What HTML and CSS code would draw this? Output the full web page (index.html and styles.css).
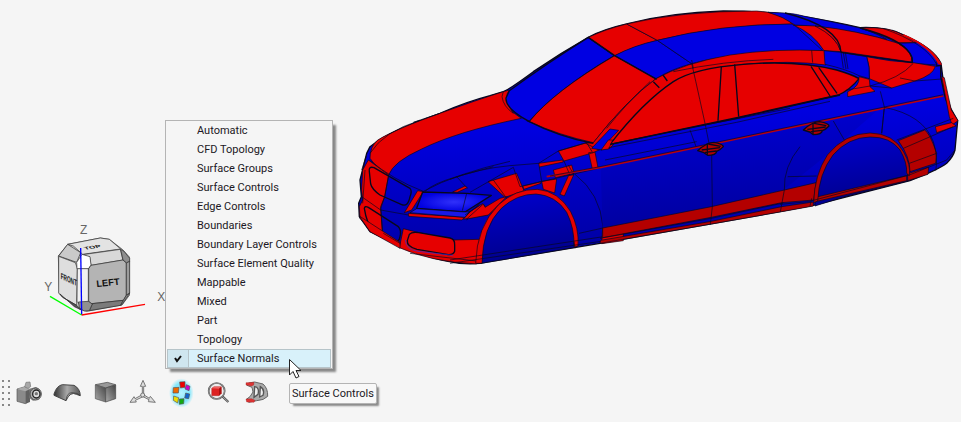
FILE: index.html
```html
<!DOCTYPE html>
<html lang="en">
<head>
<meta charset="utf-8">
<title>Model view</title>
<link rel="stylesheet" href="styles.css">
</head>
<body>
<main class="viewer">
  <div class="scene">
    <svg class="cube" viewBox="30 20 384 290" role="img" aria-label="View cube">
      <g class="edge">
        <path fill="#d2d2d2" d="M113 87L211 68L238 72L278 103L298 125V240L276 269L170 288L150 282L88 235L85 122Z"/>
        <path fill="#e3e3e3" d="M113 87L211 68L238 72L272 101L158 117L130 92Z"/>
        <path fill="#cacaca" d="M113 87L152 112L140 141L86 122Z"/>
        <path fill="#dedede" d="M86 123L136 142L142 159L140 270L98 246L86 233Z"/>
        <path fill="#d8d8d8" d="M158 118L271 102L279 134L183 150L179 126Z"/>
        <path fill="#fff" d="M140 141L156 117L180 124L183 149L175 161H141Z"/>
        <path fill="#f1f1f1" d="M142 160H175V260L150 268L141 258Z"/>
        <path fill="#b4b4b4" d="M176 160L183 150L279 134L289 143V239L280 255L183 265L176 257Z"/>
        <path fill="#8e8e8e" d="M272 102L281 107L299 129V139L289 142L279 134Z"/>
        <path fill="#9c9c9c" d="M289 143L299 138V233L289 239Z"/>
        <path fill="#7b7b7b" d="M187 265L280 255L272 270L178 286Z"/>
        <path fill="#8a8a8a" d="M280 255L289 240L299 234L276 268L272 270Z"/>
        <path fill="#909090" d="M145 260L175 258L187 266L178 286L162 287L148 277Z"/>
        <path fill="#555" d="M98 246L140 270L154 284L133 274L90 236Z"/>
      </g>
      <text class="face" x="200" y="215" font-size="28" transform="rotate(-6 200 215)">LEFT</text>
      <text class="face" font-size="26" transform="matrix(.54 .25 0 1 92 190)">FRONT</text>
      <text class="face" font-size="28" transform="matrix(.85 -.13 .3 .4 166 103)">TOP</text>
      <path class="axis" stroke="#00f" d="M152 98L155 299"/>
      <path class="axis" stroke="#0f0" d="M60 243L155 299"/>
      <path class="axis" stroke="red" d="M155 299L345 267"/>
      <text class="axis-name" x="150" y="56">Z</text>
      <text class="axis-name" x="43" y="227">Y</text>
      <text class="axis-name" x="382" y="257">X</text>
    </svg>
    <svg class="car" viewBox="1050 0 1833 840" role="img" aria-label="Car body coloured by surface normals">
      <defs>
        <linearGradient id="blue" x1="0" y1="0" x2=".15" y2="1"><stop offset="0" stop-color="#0000ef"/><stop offset=".5" stop-color="#0000df"/><stop offset="1" stop-color="#0000a0"/></linearGradient>
        <linearGradient id="door" x1="0" y1="0" x2=".2" y2="1"><stop offset="0" stop-color="#0000da"/><stop offset="1" stop-color="#00009f"/></linearGradient>
        <linearGradient id="wheel" x1="0" y1="0" x2=".2" y2="1"><stop offset="0" stop-color="#0000d2"/><stop offset="1" stop-color="#00008c"/></linearGradient>
        <radialGradient id="lamp"><stop offset="0" stop-color="#3030fa"/><stop offset="1" stop-color="#0000e0"/></radialGradient>
      </defs>
      <path class="line body" d="M1125 429Q1165 396 1320 340Q1400 305 1470 287L1510 275Q1525 270 1600 215Q1680 160 1765 112Q1810 88 1880 72Q2010 38 2170 33Q2290 33 2400 48Q2500 65 2580 83Q2660 79 2720 110Q2800 145 2823 190L2832 260L2852 325L2873 362L2865 450Q2860 470 2840 490Q2815 510 2730 542L2440 616L2340 635L1800 730L1440 790Q1390 795 1340 783Q1260 770 1110 695L1078 650L1076 610L1084 590L1080 540L1100 460L1110 440Z"/>

      <!-- hood and front fascia -->
      <g class="line" transform="translate(1050 240)">
        <path class="red" d="M60 235Q60 200 82 181Q130 150 270 100Q380 60 460 35Q464 85 514 115Q320 155 215 207Q130 245 116 285Q80 265 60 235Z"/>
        <path d="M60 220Q100 155 210 121Q150 140 270 100M58 240Q130 300 220 334M220 334Q320 280 480 244M225 334Q250 310 320 290L430 260"/>
        <path class="red" d="M55 240L116 285L104 350L92 385L98 470L60 448L30 415L28 380L38 360L35 330L38 270Z"/>
        <path class="wide" d="M58 275Q55 258 72 263L180 325Q187 333 180 350Q174 382 155 374L90 345Q66 328 62 312ZM43 385Q44 377 55 382L145 440Q155 450 150 470Q148 488 130 481L68 449Q50 430 43 385Z"/>
        <path d="M116 285L104 350L92 380L98 460M35 350L92 390L175 405M35 270L48 230M45 270L38 370"/>
        <path class="red" d="M203 332L220 335L185 390L163 398Z"/>
        <path class="red" d="M148 503L160 446L195 455L310 480L388 478L380 552Q240 545 148 503Z"/>
        <path class="red" d="M28 408L150 487V505L60 455Z"/>
        <path class="wide red" d="M178 463Q185 455 206 458L300 474Q315 477 314 495V514Q310 525 295 524L201 508Q170 500 172 482Z"/>
        <path stroke="#3030e0" d="M166 480Q167 508 204 514L310 526"/>
        <path class="red" d="M175 400L345 412L335 420L176 409Z"/>
        <path class="wide" fill="url(#lamp)" d="M218 336L350 340L424 346L345 396L200 385Z"/>
        <path fill="#1818e8" d="M200 386L345 396L360 395L345 412L180 398Z"/>
        <path class="red" d="M340 418L360 395L398 371L410 385L435 388L415 404Z"/>
        <path d="M350 340L337 392M320 290L352 325M350 420L405 375M345 405L388 376"/>
        <path class="red" d="M308 336L345 318L352 323L322 337Z"/>
        <path d="M180 520L380 543L480 530M100 460L150 490M390 370L350 405"/>
      </g>

      <!-- front fender and wheel -->
      <g class="line" transform="translate(1350 360)">
        <path fill="url(#wheel)" d="M92 430Q90 330 145 265Q190 218 258 215Q330 220 362 285Q380 330 376 382Z"/>
        <path class="red" d="M114 185L200 160L222 212L165 232Z"/>
        <path class="red" d="M50 297L100 252L105 262L150 235L170 230L115 285Z"/>
        <path class="red" d="M325 93L410 68L430 98L342 123ZM266 130L338 120L340 126L268 141ZM310 150L365 135L372 160L316 173ZM416 98L435 96L444 143L427 147ZM275 184L320 177L314 219L280 208ZM356 166L371 165L343 228L330 223ZM218 198L272 185L273 190L222 208Z"/>
        <path class="red" d="M77 430Q80 320 145 255Q195 207 262 208Q325 213 362 275Q388 325 384 378L372 382Q374 325 350 277Q317 226 258 222Q200 222 154 265Q98 320 96 430Z"/>
        <path d="M0 178Q90 145 180 137L266 130L325 93L410 68M60 217L190 142L210 200L445 145L510 130M268 141L275 184M130 180L170 235M342 123L360 166M355 135L372 165M375 163Q450 220 459 320V370M387 340L459 324M0 420L460 350M0 430L460 363M375 385L372 365"/>
        <path class="red" d="M458 324L520 315V362L455 371ZM410 68L430 65L452 88L428 98Z"/>
      </g>

      <!-- windshield, roof front and side glass -->
      <g class="line" transform="translate(1470 0)">
        <path class="red" d="M40 275L58 270Q42 290 58 320L70 340Q40 320 36 290Z"/>
        <path class="wide blue" d="M58 272Q170 190 295 112L374 167Q200 270 118 365Q45 325 48 294Z"/>
        <path class="red" d="M118 365Q190 275 374 167L498 236Q410 300 310 428Q205 405 118 365Z"/>
        <path class="red" d="M295 112Q345 88 410 72L502 121Q430 140 374 167Z"/>
        <path class="blue" d="M374 167Q430 137 502 121L605 191Q545 207 498 236Z"/>
        <path class="red" d="M410 72Q570 33 800 33L880 42L910 72Q690 75 502 121Z"/>
        <path class="blue" d="M502 121Q690 72 910 72L998 152Q750 150 605 191Z"/>
        <path class="red" d="M498 236Q580 190 720 165Q850 145 1005 152L1008 195Q900 180 760 193Q620 205 550 255Q470 310 360 445L325 449L287 430L310 428Q410 300 498 236Z"/>
        <path class="wide red" d="M360 433Q460 305 550 245Q610 205 760 193Q920 180 1040 210Q1090 225 1107 236Q1080 270 1045 285L740 353Z"/>
        <path class="heavy" d="M694 200L684 362M734 193L746 350M963 199L1020 288M986 202L1041 280"/>
        <path d="M605 191Q610 210 645 370L660 445M605 180L610 205M550 215Q700 183 850 178M965 151L968 188M480 245Q405 315 350 385"/>
        <path class="heavy" d="M295 112L374 167L500 238M519 225L532 243M490 245L508 263"/>
        <path class="blue" d="M305 445L360 387L386 391L360 418Q345 440 335 450Z"/>
        <path class="red" d="M333 450L355 420L368 420L356 447Z"/>
        <path d="M356 443L740 367L1020 304M345 480L620 425M600 390L620 445M640 376L900 325"/>
        <path class="heavy" d="M360 433L740 355L1050 285M110 361Q210 412 310 430"/>
      </g>

      <!-- rear deck -->
      <g class="line" transform="translate(2100 0)">
        <path class="red" d="M205 37L255 44L320 75H280Q260 50 205 37ZM280 75H345Q410 110 423 155L372 152Q340 100 280 75Z"/>
        <path class="blue" d="M205 37Q280 38 310 48Q410 68 480 84Q530 100 560 118Q450 90 345 78L285 75Q250 50 205 37Z"/>
        <path class="red" d="M345 78Q470 90 595 130Q642 160 634 186L423 155Q410 110 345 78Z"/>
        <path class="red" d="M480 84Q570 78 610 105L652 128H590Q550 105 480 84Z"/>
        <path class="blue" d="M595 130L652 128Q720 165 710 195L638 190Q640 155 595 130Z"/>
        <path class="red" d="M500 170Q570 185 640 188L706 199Q700 225 645 243L575 264L508 236Q510 200 500 170Z"/>
        <path class="blue" d="M372 152L423 157L500 170Q510 200 508 236L477 227Q440 208 375 193Z"/>
        <path class="red" d="M477 230L508 238L510 260L525 274L443 290V275Q480 260 477 230Z"/>
        <path class="heavy" d="M255 39Q420 80 423 157M480 84Q600 115 630 160Q640 176 636 188L423 157"/>
        <path d="M423 157L430 205M436 157L444 207M430 158L438 207M510 258Q600 235 640 190M600 234L645 243L725 237M440 270L510 258L575 264M541 274L553 321M553 321L545 400M548 85Q680 130 712 197M575 90Q700 135 722 190"/>
        <path class="red" stroke="none" d="M610 102Q700 140 726 195L715 193Q690 142 610 107Z"/>
        <path class="heavy" d="M722 195V230L735 290L752 340M708 198L725 196"/>
        <path class="red" d="M725 230L733 233L754 330L774 362L756 375L748 350Z"/>
        <path class="red" d="M706 380L755 368L768 378L710 398Z"/>
      </g>

      <!-- doors, sill and handles -->
      <g class="line" transform="translate(1800 300)">
        <path class="door" stroke="none" d="M2 204L600 77L840 23L840 25L650 190L550 270L334 320L8 384Z"/>
        <path class="dark-red" d="M8 384L334 320L553 270L648 248L641 300L545 308L334 352L8 413Z"/>
        <path class="dark-red" d="M2 421L334 364L545 320L640 306V318L545 335L334 372L0 430Z"/>
        <path fill="none" stroke="#b80010" stroke-width="5" d="M-160 230L0 203L330 134L600 77L1030 -12"/>
        <path d="M-150 228L0 200L330 131L600 74L1030 -16M335 165L337 320L331 374M600 140Q550 200 553 270L541 336M563 230L650 228M0 415L334 355L550 309"/>
        <g id="handle"><path class="wide dark-red" d="M293 152Q320 127 342 127Q370 132 370 140Q360 151 350 154Q348 166 323 166L312 158Z"/><path class="heavy" d="M305 150L360 143M325 132L362 139M315 157L350 153M322 130V164"/></g>
        <use href="#handle" x="317" y="-62"/>
      </g>

      <!-- rear quarter and wheel -->
      <g class="line" transform="translate(2340 270)">
        <path fill="url(#wheel)" d="M105 348Q105 255 155 185Q205 135 270 135Q340 135 370 190Q390 235 385 272L200 318Z"/>
        <path class="dark-red" d="M355 152L434 120Q450 130 470 190L467 220L390 245Q390 200 355 152Z"/>
        <path class="dark-red" d="M383 251L446 231L444 253L383 272ZM106 322L380 257V272L106 335Z"/>
        <path class="dark-red" d="M101 338Q103 255 142 195Q195 130 270 129Q340 130 371 186Q393 225 388 257L380 250Q382 218 360 180Q330 140 270 141Q205 142 159 195Q117 250 113 333Z"/>
        <path d="M313 52Q430 75 460 155Q475 205 467 242M350 150L520 85M370 175L520 110M388 220L470 190M160 93L193 150M313 52L305 130M85 335L388 255L500 210L525 180M0 343L85 335M90 348L95 325"/>
      </g>
    </svg>
  </div>

  <div class="toolbar" role="toolbar" aria-label="View tools">
    <span class="grip"></span>
    <button type="button" aria-label="Snapshot"><svg viewBox="45 27 84 84"><path fill="#8a8a8a" stroke="#555" stroke-width="2" d="M51 57L75 50L86 57V94L76 101L51 94Z"/><path fill="#aaa" d="M51 57L75 50L90 57L76 64Z"/><path fill="#606060" d="M77 64L90 58V96L77 101Z"/><path fill="#a8a8a8" stroke="#777" stroke-width="2" d="M74 51L78 37L90 36L92 50L84 55Z"/><path fill="#777" d="M88 56L108 51L120 59L118 88L99 92L88 84Z"/><ellipse cx="107" cy="72" rx="17" ry="18" fill="#aaa" stroke="#555" stroke-width="3"/><ellipse cx="109" cy="72" rx="11" ry="12" fill="#ddd" stroke="#222" stroke-width="4"/><circle cx="109" cy="71" r="5" fill="#777"/></svg></button>
    <button type="button" aria-label="Surfaces"><svg viewBox="159 27 84 84"><defs><linearGradient id="arch"><stop stop-color="#333"/><stop offset=".5" stop-color="#aaa"/><stop offset="1" stop-color="#555"/></linearGradient></defs><path fill="url(#arch)" stroke="#444" stroke-width="3" d="M162 72Q170 47 187 44L222 46Q240 55 241 77L229 73Q211 63 198 92L162 76Z"/><path fill="none" stroke="#333" stroke-width="2" d="M198 92Q200 68 216 68Q234 68 240 77"/></svg></button>
    <button type="button" aria-label="Solid"><svg viewBox="273 27 84 84"><defs><linearGradient id="solid" x1="1" y1="0" x2="0" y2="1"><stop stop-color="#444"/><stop offset="1" stop-color="#aaa"/></linearGradient></defs><path fill="#999" stroke="#444" stroke-width="2" d="M286 44L322 37L347 44L317 54Z"/><path fill="url(#solid)" stroke="#555" stroke-width="2" d="M286 45L317 54V96L286 86Z"/><path fill="url(#solid)" stroke="#444" stroke-width="2" d="M317 54L347 45V86L317 96Z"/></svg></button>
    <button type="button" aria-label="Axes"><svg viewBox="387 27 84 84"><g fill="#ddd" stroke="#777" stroke-width="3"><path d="M427 74V49H421L429 31L437 49H431V74L448 85L451 79L466 97L445 95L447 89L429 80L406 91L409 96L390 97L402 80L405 86Z"/><circle cx="428" cy="75" r="6"/></g></svg></button>
    <button type="button" aria-label="Colour by" aria-haspopup="menu"><svg viewBox="84 27 84 84"><defs><radialGradient id="glow"><stop stop-color="#b8f2ff"/><stop offset=".65" stop-color="#7fe6fc"/><stop offset="1" stop-color="#7fe6fc" stop-opacity="0"/></radialGradient></defs><ellipse cx="127" cy="69" rx="37" ry="44" fill="url(#glow)"/><g stroke="#555" stroke-width="2"><path fill="#e00" d="M122 36L138 35V52L124 54Z"/><path fill="#c0c" d="M142 44L153 49L150 62L138 57Z"/><path fill="#16c" d="M140 69L152 72L149 86L137 84Z"/><path fill="#1a1" d="M121 87L135 86L134 101L121 103Z"/><path fill="#ed0" d="M104 78L119 83L116 99L103 91Z"/><path fill="#e60" d="M103 53L120 52L118 69L102 69Z"/></g></svg></button>
    <button type="button" aria-label="Inspect"><svg viewBox="195 27 84 84"><path stroke="#555" stroke-width="7" d="M245 77L265 96"/><path stroke="#ccc" stroke-width="2" d="M245 77L265 96"/><circle cx="230" cy="63" r="24" fill="#eee" stroke="#555" stroke-width="5"/><circle cx="230" cy="63" r="24" fill="none" stroke="#aaa" stroke-width="2"/><path fill="#d22" stroke="#922" d="M215 55L222 50H244V70L237 77H215Z"/><path fill="#ee6060" d="M215 55L222 50H244L237 56Z"/><path fill="#a11" d="M237 56L244 50V70L237 77Z"/></svg></button>
    <button type="button" aria-label="Section"><svg viewBox="309 27 84 84"><path fill="#aaa" stroke="#666" stroke-width="3" d="M326 39L344 36L369 42Q384 55 383 79Q372 91 350 92L326 97L319 88L330 80L339 66L336 52L321 46Z"/><path fill="#eee" stroke="#555" stroke-width="4" d="M344 50Q359 52 354 73L342 82ZM361 50Q375 58 369 76L359 81Z"/><path fill="#d33" stroke="#922" d="M318 38L342 37L341 45L334 48L318 45ZM318 87L335 86L345 91L342 97L320 96Z"/></svg></button>
  </div>

  <div class="menu" role="menu" aria-label="Colour by">
    <button type="button" role="menuitemradio">Automatic</button>
    <button type="button" role="menuitemradio">CFD Topology</button>
    <button type="button" role="menuitemradio">Surface Groups</button>
    <button type="button" role="menuitemradio">Surface Controls</button>
    <button type="button" role="menuitemradio">Edge Controls</button>
    <button type="button" role="menuitemradio">Boundaries</button>
    <button type="button" role="menuitemradio">Boundary Layer Controls</button>
    <button type="button" role="menuitemradio">Surface Element Quality</button>
    <button type="button" role="menuitemradio">Mappable</button>
    <button type="button" role="menuitemradio">Mixed</button>
    <button type="button" role="menuitemradio">Part</button>
    <button type="button" role="menuitemradio">Topology</button>
    <button type="button" role="menuitemradio" aria-checked="true" class="checked"><span class="tick"><svg viewBox="0 0 8 8"><path d="M1 3L3 6L7 1"/></svg></span>Surface Normals</button>
  </div>
  <div class="tooltip" role="tooltip">Surface Controls</div>
  <svg class="pointer" viewBox="0 0 13 20" aria-hidden="true"><path d="M.5 .5V16L4 12.500L7 19L10 17.500L7 11.500H12Z"/></svg>
</main>
</body>
</html>
```
FILE: styles.css
```css
* { box-sizing: border-box; }

body {
  margin: 0;
  background: #f5f5f5;
  color: #1c1824;
  font: 11px/19px Roboto, "Liberation Sans", sans-serif;
}

.viewer {
  position: relative;
  display: flex;
  flex-direction: column;
  min-height: 100vh;
  padding-bottom: 15px;
}

.scene {
  flex: 1;
  display: grid;
  grid-template-columns: 350px 1fr;
  align-items: start;
}

.cube { width: 128px; margin: 222px 0 0 40px; }
.edge { stroke: #2a2a2a; stroke-width: 2; stroke-linejoin: round; }
.face { font-family: "Liberation Sans", sans-serif; font-weight: bold; fill: #111; }
.axis { fill: none; stroke-width: 4; }
.axis-name { font: 36px "Liberation Sans", sans-serif; fill: #666; }

.car { width: 100%; }
.line { fill: none; stroke: #08081c; stroke-width: 2; stroke-linejoin: round; }
.body { fill: url(#blue); stroke-width: 4; }
.wide { stroke-width: 4; }
.heavy { stroke-width: 4; }
.red { fill: #e60000; }
.dark-red { fill: #b40000; }
.blue { fill: #0000e2; }
.door { fill: url(#door); }

.toolbar { display: flex; align-items: center; height: 28px; }
.toolbar button {
  display: grid;
  place-items: center;
  width: 38px;
  height: 28px;
  padding: 0;
  border: 0;
  background: none;
}
.toolbar svg { width: 28px; height: 28px; overflow: visible; fill: none; }
.grip {
  width: 10px;
  height: 28px;
  background: radial-gradient(circle at 3px 2px, #888 1px, transparent 1px) 0 0 / 6px 6px;
}

.menu {
  position: absolute;
  left: 165px;
  top: 120px;
  width: 168px;
  border: 1px solid #b4b4b4;
  padding: 0 1px;
  background: #f5f5f5;
  box-shadow: 4px 4px 2px -1px #888;
}
.menu button {
  display: flex;
  align-items: center;
  width: 100%;
  height: 19px;
  padding: 0 0 0 30px;
  border: 0;
  background: none;
  color: inherit;
  font: inherit;
  text-align: left;
}
.menu .checked {
  padding: 0;
  border: 1px solid #b6c4c9;
  background: #d8f1fa;
}
.tick {
  display: grid;
  place-items: center;
  align-self: stretch;
  width: 21px;
  margin-right: 8px;
  border-right: 1px solid #b6c4c9;
  background: #cfe6ef;
}
.tick svg { width: 8px; fill: none; stroke: #111; stroke-width: 2; }

.tooltip {
  position: absolute;
  left: 289px;
  top: 383px;
  padding: 0 2px;
  border: 1px solid #b4b4b4;
  border-radius: 2px;
  background: #f8f8f8;
  box-shadow: 3px 3px 2px -1px #888;
}

.pointer { position: absolute; left: 289px; top: 359px; width: 13px; height: 20px; }
.pointer path { fill: #fff; stroke: #222; }
```
